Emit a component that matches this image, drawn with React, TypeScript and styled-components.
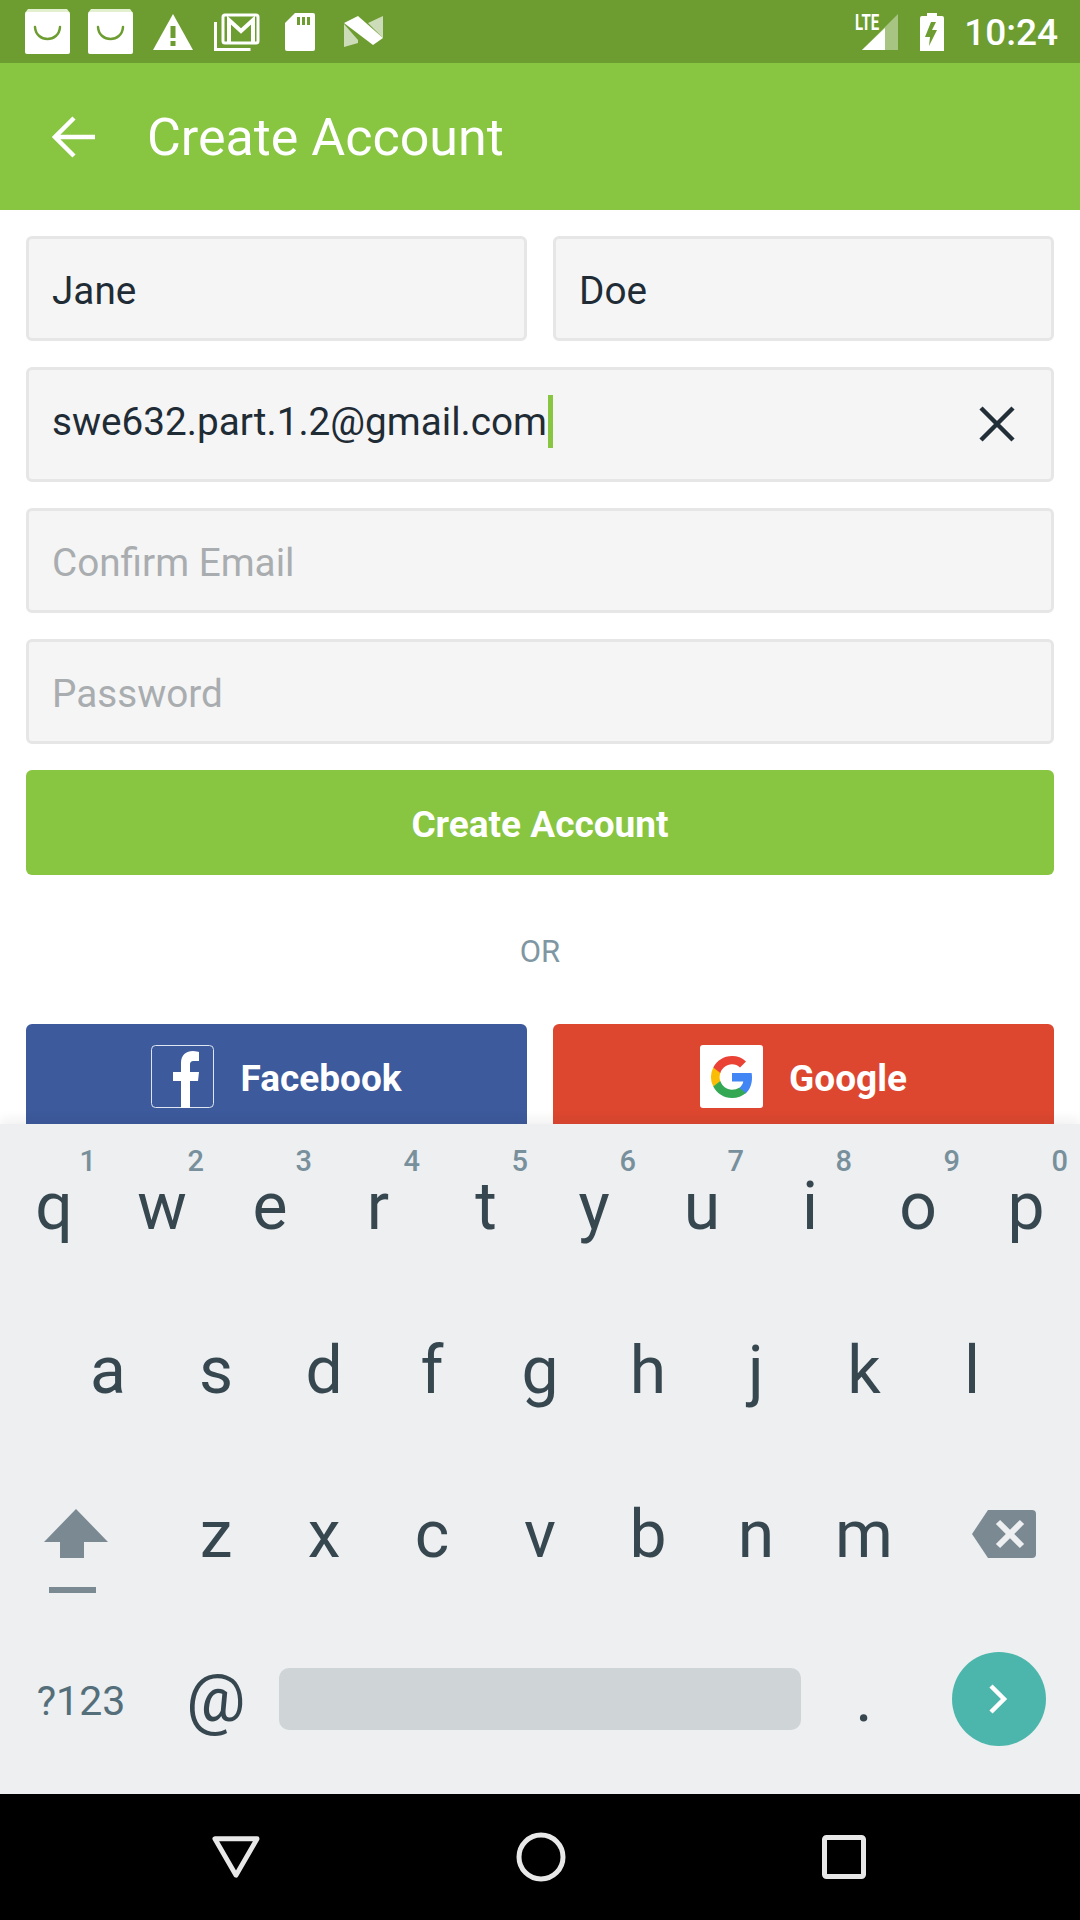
import { createGlobalStyle, styled } from 'styled-components';

const GlobalStyle = createGlobalStyle`
  html, body {
    margin: 0;
    padding: 0;
    background: #fff;
    font-family: Roboto, "Liberation Sans", sans-serif;
  }
`;

const Screen = styled.div`
  width: 1080px;
  height: 1920px;
  display: flex;
  flex-direction: column;
  overflow: hidden;
`;

const StatusBar = styled.div`
  flex: 0 0 63px;
  background: #6d9d31;
  display: flex;
  align-items: center;
  justify-content: space-between;
  padding: 0 22px 0 25px;
  color: #fff;
`;

const StatusGroup = styled.div`
  display: flex;
  align-items: center;
`;

const SignalIcon = styled.div`
  position: relative;
  width: 46px;
  height: 38px;
  margin-right: 21px;
`;

const LteLabel = styled.span`
  position: absolute;
  top: -3px;
  left: 2px;
  font-size: 22px;
  line-height: 26px;
  font-weight: 700;
  transform: scaleX(0.68);
  transform-origin: left top;
`;

const Clock = styled.span`
  font-size: 37px;
  font-weight: 500;
  margin-left: 20px;
  margin-top: 2px;
`;

const AppBar = styled.div`
  flex: 0 0 147px;
  background: #88c540;
  display: flex;
  align-items: center;
  padding-left: 52px;
  color: #fff;
`;

const Title = styled.h1`
  margin: 1px 0 0 51px;
  font-size: 52px;
  font-weight: 400;
`;

const Form = styled.div`
  flex: 1;
  min-height: 0;
  overflow: hidden;
  padding: 26px 26px 0;
  display: flex;
  flex-direction: column;
  gap: 26px;
`;

const Row = styled.div`
  display: flex;
  flex-shrink: 0;
  gap: 26px;
`;

const Field = styled.div<{ $tall?: boolean; $muted?: boolean }>`
  flex: 1 0 auto;
  box-sizing: border-box;
  height: ${(p) => (p.$tall ? '115px' : '105px')};
  background: #f5f5f5;
  border: 3px solid #e6e6e6;
  border-radius: 6px;
  display: flex;
  align-items: center;
  padding: ${(p) => (p.$tall ? '0 23px 6px' : '3px 23px 0')};
  font-size: 38.7px;
  color: ${(p) => (p.$muted ? '#a9adb0' : '#1f2c35')};
`;

const HalfField = styled(Field)`
  flex: 1 1 0;
`;

const StackField = styled(Field)`
  flex: 0 0 auto;
`;

const Caret = styled.span`
  width: 5px;
  height: 53px;
  background: #88c540;
  margin-left: 1px;
`;

const ClearIcon = styled.svg`
  margin-left: auto;
  margin-right: 12px;
  margin-top: 5px;
`;

const SubmitButton = styled.div`
  flex-shrink: 0;
  height: 105px;
  padding-top: 4px;
  box-sizing: border-box;
  background: #88c540;
  border-radius: 6px;
  display: flex;
  align-items: center;
  justify-content: center;
  color: #fff;
  font-size: 37px;
  font-weight: 700;
`;

const OrLabel = styled.div`
  flex-shrink: 0;
  height: 97px;
  padding-top: 3px;
  box-sizing: border-box;
  display: flex;
  align-items: center;
  justify-content: center;
  color: #7f97a2;
  font-size: 31px;
`;

const SocialButton = styled.div<{ $color: string }>`
  flex: 1;
  height: 125px;
  background: ${(p) => p.$color};
  border-radius: 6px 6px 0 0;
  display: flex;
  justify-content: center;
  gap: 26px;
  padding-top: 21px;
  box-sizing: border-box;
  color: #fff;
  font-size: 37px;
  font-weight: 700;
`;

const SocialLabel = styled.span`
  line-height: 67px;
`;

const Keyboard = styled.div`
  flex: 0 0 670px;
  position: relative;
  background: #edeff1;
  box-shadow: 0 -6px 10px rgba(0, 0, 0, 0.05);
  box-sizing: border-box;
`;

const KeyRow = styled.div<{ $inset?: number }>`
  height: 164px;
  display: flex;
  padding: 0 ${(p) => p.$inset ?? 0}px;
`;

const Key = styled.div<{ $width?: number }>`
  position: relative;
  flex: 0 0 ${(p) => p.$width ?? 108}px;
  display: flex;
  align-items: center;
  justify-content: center;
  color: #37474f;
  font-size: 66px;
`;

const Hint = styled.span`
  position: absolute;
  top: 20px;
  right: 12px;
  color: #78909c;
  font-size: 29px;
  font-weight: 500;
`;

const SymbolLabel = styled.span`
  color: #546e7a;
  font-size: 41px;
  margin-top: 6px;
`;

const SpaceBar = styled.div`
  width: 522px;
  height: 62px;
  margin-top: 2px;
  border-radius: 10px;
  background: #cfd4d7;
`;

const EnterButton = styled.div`
  width: 94px;
  height: 94px;
  margin-top: 2px;
  border-radius: 50%;
  background: #4db6ac;
  display: flex;
  align-items: center;
  justify-content: center;
`;

const NavBar = styled.div`
  flex: 0 0 126px;
  background: #000;
  display: flex;
  align-items: center;
  padding-left: 212px;
  gap: 256px;
`;

const BagIcon = ({ gap }: { gap: number }) => (
  <svg width="45" height="45" viewBox="0 0 45 45" style={{ marginRight: gap }}>
    <path d="M3 0h39l3 4H0z" fill="#e2f0d0" />
    <rect y="3" width="45" height="42" rx="2" fill="#fff" />
    <path d="M10 18c1 16 24 16 25 0" fill="none" stroke="#6d9d31" strokeWidth="2.5" strokeLinecap="round" />
  </svg>
);

const App = () => {
  const topRow = 'qwertyuiop'.split('');
  const midRow = 'asdfghjkl'.split('');
  const lowRow = 'zxcvbnm'.split('');

  return (
    <Screen>
      <GlobalStyle />
      <StatusBar>
        <StatusGroup>
          <BagIcon gap={18} />
          <BagIcon gap={20} />
          <svg width="40" height="36" viewBox="0 0 40 36" style={{ marginRight: 21 }}>
            <path d="M20 0l20 36H0z" fill="#fff" />
            <rect x="17.5" y="12" width="5" height="12" fill="#6d9d31" />
            <rect x="17.5" y="27" width="5" height="5" fill="#6d9d31" />
          </svg>
          <svg width="46" height="38" viewBox="0 0 46 38" style={{ marginRight: 25 }}>
            <path d="M1.5 9v27.500h35" fill="none" stroke="#fff" strokeWidth="3" />
            <rect x="9" y="2" width="35" height="28" rx="2" fill="none" stroke="#fff" strokeWidth="3" />
            <path d="M15 29V7l12 11L39 7v22" fill="none" stroke="#fff" strokeWidth="4" />
          </svg>
          <svg width="30" height="38" viewBox="0 0 30 38" style={{ marginRight: 29 }}>
            <path d="M10 0h18a2 2 0 0 1 2 2v34a2 2 0 0 1-2 2H2a2 2 0 0 1-2-2V10z" fill="#fff" />
            <path d="M12 4h3v8h-3zM17 4h3v8h-3zM22 4h3v8h-3z" fill="#6d9d31" />
          </svg>
          <svg width="39" height="31" viewBox="0 0 39 31">
            <path d="M0 8l14 16v3L0 31z" fill="#cddcb8" />
            <path d="M24 7l15-7v22z" fill="#cddcb8" />
            <path d="M0 7l14-7 25 22-10 7z" fill="#fff" />
          </svg>
        </StatusGroup>
        <StatusGroup>
          <SignalIcon>
            <svg width="46" height="38" viewBox="0 0 46 38">
              <path d="M45 1v36H9z" fill="#fff" opacity="0.4" />
              <path d="M32 15v22H9z" fill="#fff" />
            </svg>
            <LteLabel>LTE</LteLabel>
          </SignalIcon>
          <svg width="24" height="38" viewBox="0 0 24 38">
            <path d="M7 0h10v3h5a2 2 0 0 1 2 2v33H0V5a2 2 0 0 1 2-2h5z" fill="#fff" />
            <path d="M11 9L5 24h5l-1 9 8-16h-5l4-8z" fill="#6d9d31" />
          </svg>
          <Clock>10:24</Clock>
        </StatusGroup>
      </StatusBar>

      <AppBar>
        <svg width="44" height="42" viewBox="0 0 44 42">
          <path d="M43 21H4M22 2L3 21l19 19" fill="none" stroke="#fff" strokeWidth="4.5" />
        </svg>
        <Title>Create Account</Title>
      </AppBar>

      <Form>
        <Row>
          <HalfField>Jane</HalfField>
          <HalfField>Doe</HalfField>
        </Row>
        <StackField $tall>
          swe632.part.1.2@gmail.com
          <Caret />
          <ClearIcon width="38" height="38" viewBox="0 0 38 38">
            <path d="M3 3l32 32M35 3L3 35" stroke="#232f38" strokeWidth="4.5" />
          </ClearIcon>
        </StackField>
        <StackField $muted>Confirm Email</StackField>
        <StackField $muted>Password</StackField>
        <SubmitButton>Create Account</SubmitButton>
        <OrLabel>OR</OrLabel>
        <Row>
          <SocialButton $color="#3d5a9c">
            <svg width="63" height="63" viewBox="0 0 63 63" style={{ flexShrink: 0 }}>
              <rect x="0.5" y="0.5" width="62" height="62" rx="4" fill="none" stroke="#dfe5f1" strokeWidth="1" />
              <path
                d="M39 63V36h8l1-9h-9v-7c0-3 1-4 4-4h5V7c-1 0-3-1-6-1-7 0-12 4-12 12v9h-8v9h8v27z"
                fill="#fff"
              />
            </svg>
            <SocialLabel>Facebook</SocialLabel>
          </SocialButton>
          <SocialButton $color="#dd4730">
            <svg width="63" height="63" viewBox="0 0 63 63" style={{ flexShrink: 0 }}>
              <rect width="63" height="63" rx="3" fill="#fff" />
              <path d="M52 32.500c0-1.600-.1-3-.4-4.400H32v8.400h11.300c-.5 2.600-2 4.900-4.200 6.400v5.400h6.800c4-3.700 6.100-9.100 6.100-15.800z" fill="#4285f4" />
              <path d="M32 53c5.600 0 10.400-1.900 13.900-5l-6.800-5.300c-1.900 1.300-4.300 2-7.100 2-5.400 0-10-3.700-11.700-8.600h-7v5.400C16.800 48.400 23.900 53 32 53z" fill="#34a853" />
              <path d="M20.300 36.100c-.9-2.600-.9-5.500 0-8.200v-5.400h-7a21 21 0 0 0 0 19z" fill="#fbbc05" />
              <path d="M32 19.300c3.100 0 5.800 1 8 3.100l6-6A20.500 20.500 0 0 0 32 11c-8.100 0-15.200 4.600-18.700 11.500l7 5.400c1.700-5 6.300-8.600 11.700-8.600z" fill="#ea4335" />
            </svg>
            <SocialLabel>Google</SocialLabel>
          </SocialButton>
        </Row>
      </Form>

      <Keyboard>
        <KeyRow>
          {topRow.map((letter, i) => (
            <Key key={letter}>
              {letter}
              <Hint>{(i + 1) % 10}</Hint>
            </Key>
          ))}
        </KeyRow>
        <KeyRow $inset={54}>
          {midRow.map((letter) => (
            <Key key={letter}>{letter}</Key>
          ))}
        </KeyRow>
        <KeyRow>
          <Key $width={162}>
            <svg width="64" height="86" viewBox="0 0 64 86" style={{ marginRight: 11, marginTop: 36 }}>
              <path d="M32 0l32 33H40v16H16V33H0z" fill="#7b8a92" />
              <rect x="5" y="78" width="47" height="6" fill="#7b8a92" />
            </svg>
          </Key>
          {lowRow.map((letter) => (
            <Key key={letter}>{letter}</Key>
          ))}
          <Key $width={162}>
            <svg width="64" height="48" viewBox="0 0 64 48" style={{ marginLeft: 10 }}>
              <path d="M16 0h44a4 4 0 0 1 4 4v40a4 4 0 0 1-4 4H16L0 24z" fill="#7b8a92" />
              <path d="M26 12l24 24M50 12L26 36" stroke="#edeff1" strokeWidth="6" />
            </svg>
          </Key>
        </KeyRow>
        <KeyRow>
          <Key $width={162}>
            <SymbolLabel>?123</SymbolLabel>
          </Key>
          <Key>@</Key>
          <Key $width={540}>
            <SpaceBar />
          </Key>
          <Key>.</Key>
          <Key $width={162}>
            <EnterButton>
              <svg width="20" height="30" viewBox="0 0 20 30">
                <path d="M2 2l13 13L2 28" fill="none" stroke="#fff" strokeWidth="4.500" />
              </svg>
            </EnterButton>
          </Key>
        </KeyRow>
      </Keyboard>

      <NavBar>
        <svg width="48" height="44" viewBox="0 0 50 44">
          <path d="M3 3h44L25 41z" fill="none" stroke="#e8e8e8" strokeWidth="5" strokeLinejoin="round" />
        </svg>
        <svg width="50" height="50" viewBox="0 0 50 50">
          <circle cx="25" cy="25" r="22" fill="none" stroke="#e8e8e8" strokeWidth="5" />
        </svg>
        <svg width="44" height="44" viewBox="0 0 44 44">
          <rect x="2.500" y="2.500" width="39" height="39" rx="2" fill="none" stroke="#e8e8e8" strokeWidth="5" />
        </svg>
      </NavBar>
    </Screen>
  );
};

export default App;
